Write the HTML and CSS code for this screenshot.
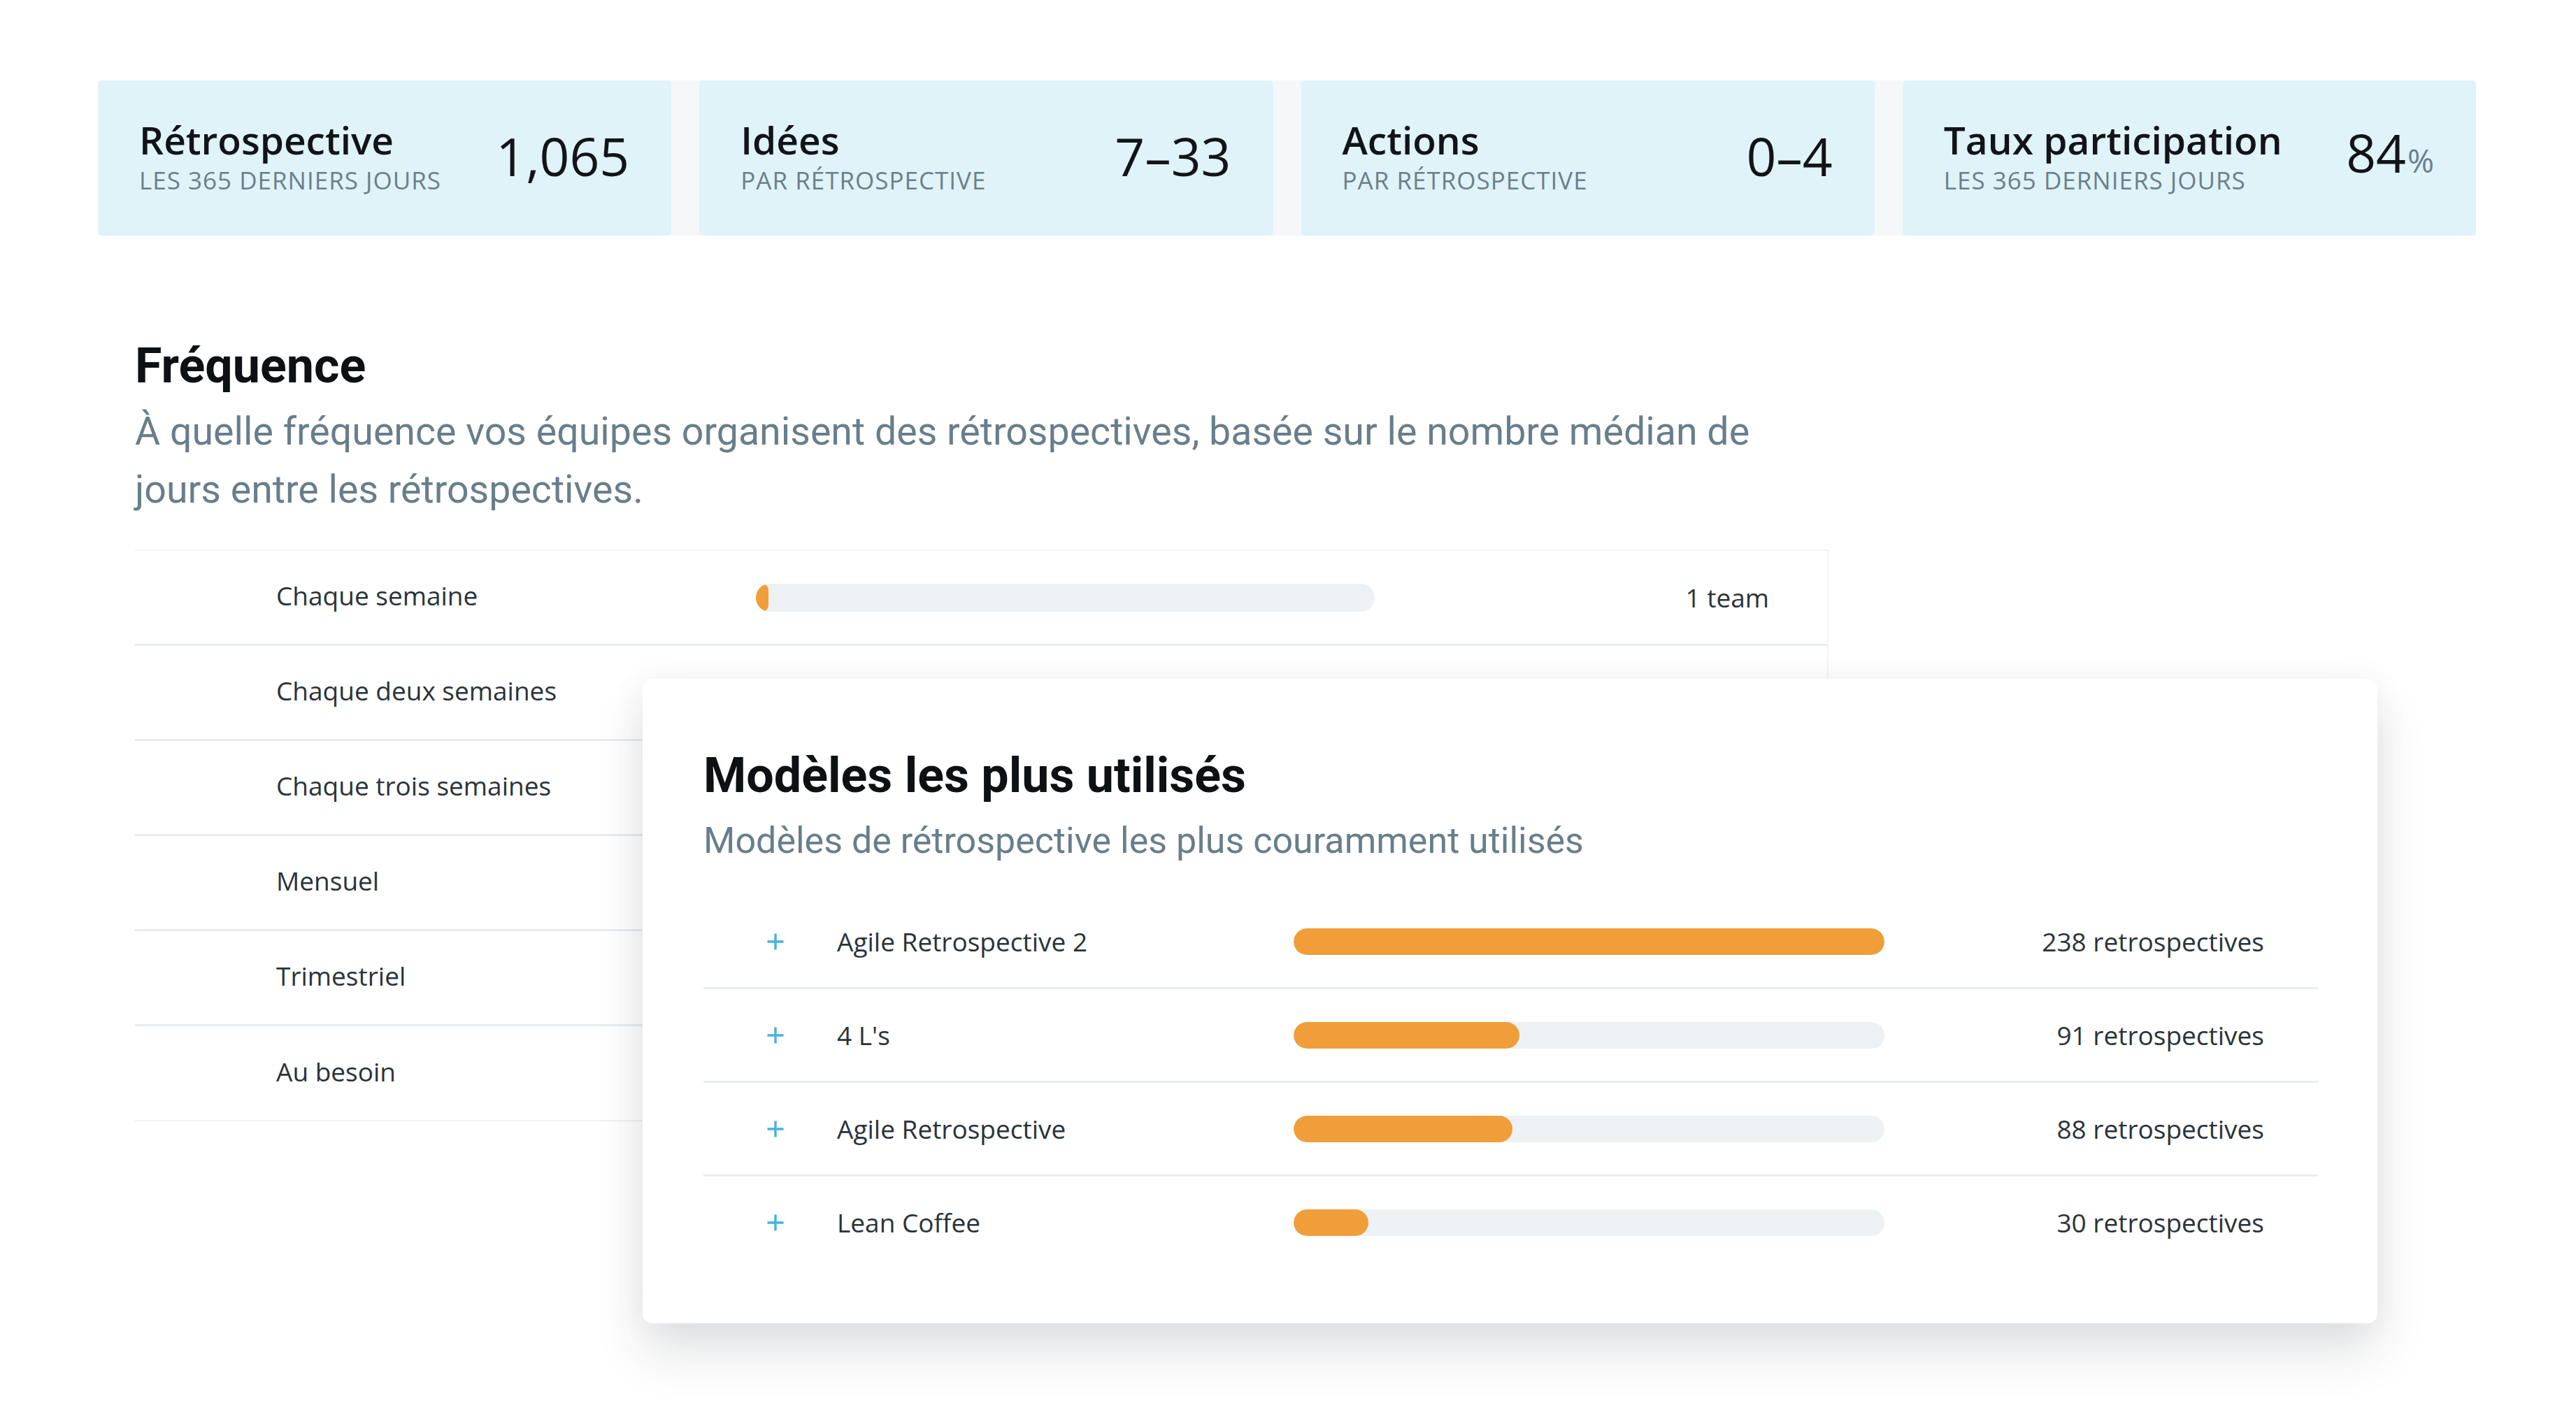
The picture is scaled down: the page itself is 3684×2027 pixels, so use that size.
FILE: index.html
```html
<!DOCTYPE html>
<html lang="fr">
<head>
<meta charset="utf-8">
<title>Statistiques</title>
<link rel="stylesheet" href="styles.css">
</head>
<body>
<main class="page">
  <section class="stats">
    <div class="stat">
      <div class="stat-text">
        <div class="stat-title">Rétrospective</div>
        <div class="stat-sub">LES 365 DERNIERS JOURS</div>
      </div>
      <div class="stat-value">1,065</div>
    </div>
    <div class="stat">
      <div class="stat-text">
        <div class="stat-title">Idées</div>
        <div class="stat-sub">PAR RÉTROSPECTIVE</div>
      </div>
      <div class="stat-value">7–33</div>
    </div>
    <div class="stat">
      <div class="stat-text">
        <div class="stat-title">Actions</div>
        <div class="stat-sub">PAR RÉTROSPECTIVE</div>
      </div>
      <div class="stat-value">0–4</div>
    </div>
    <div class="stat">
      <div class="stat-text">
        <div class="stat-title">Taux participation</div>
        <div class="stat-sub">LES 365 DERNIERS JOURS</div>
      </div>
      <div class="stat-value">84<span class="stat-unit">%</span></div>
    </div>
  </section>

  <section class="freq">
    <h2 class="section-title">Fréquence</h2>
    <p class="section-desc">À quelle fréquence vos équipes organisent des rétrospectives, basée sur le nombre médian de jours entre les rétrospectives.</p>
    <div class="freq-table">
      <div class="freq-row">
        <span class="label">Chaque semaine</span>
        <div class="bar bar-freq"><div class="fill" style="width:2%"></div></div>
        <span class="count">1 team</span>
      </div>
      <div class="freq-row">
        <span class="label">Chaque deux semaines</span>
        <div class="bar bar-freq"><div class="fill" style="width:0%"></div></div>
        <span class="count"></span>
      </div>
      <div class="freq-row">
        <span class="label">Chaque trois semaines</span>
        <div class="bar bar-freq"><div class="fill" style="width:0%"></div></div>
        <span class="count"></span>
      </div>
      <div class="freq-row">
        <span class="label">Mensuel</span>
        <div class="bar bar-freq"><div class="fill" style="width:0%"></div></div>
        <span class="count"></span>
      </div>
      <div class="freq-row">
        <span class="label">Trimestriel</span>
        <div class="bar bar-freq"><div class="fill" style="width:0%"></div></div>
        <span class="count"></span>
      </div>
      <div class="freq-row">
        <span class="label">Au besoin</span>
        <div class="bar bar-freq"><div class="fill" style="width:0%"></div></div>
        <span class="count"></span>
      </div>
    </div>
  </section>

  <section class="templates-card">
    <h2 class="section-title">Modèles les plus utilisés</h2>
    <p class="section-desc card-desc">Modèles de rétrospective les plus couramment utilisés</p>
    <div class="tpl-table">
      <div class="tpl-row">
        <span class="plus"><svg width="24" height="24" viewBox="0 0 24 24"><path d="M12 0.5v23M0.5 12h23" stroke="#45b3dc" stroke-width="3.4" fill="none"/></svg></span>
        <span class="label">Agile Retrospective 2</span>
        <div class="bar bar-tpl"><div class="fill" style="width:100%"></div></div>
        <span class="count">238 retrospectives</span>
      </div>
      <div class="tpl-row">
        <span class="plus"><svg width="24" height="24" viewBox="0 0 24 24"><path d="M12 0.5v23M0.5 12h23" stroke="#45b3dc" stroke-width="3.4" fill="none"/></svg></span>
        <span class="label">4 L's</span>
        <div class="bar bar-tpl"><div class="fill" style="width:38.2%"></div></div>
        <span class="count">91 retrospectives</span>
      </div>
      <div class="tpl-row">
        <span class="plus"><svg width="24" height="24" viewBox="0 0 24 24"><path d="M12 0.5v23M0.5 12h23" stroke="#45b3dc" stroke-width="3.4" fill="none"/></svg></span>
        <span class="label">Agile Retrospective</span>
        <div class="bar bar-tpl"><div class="fill" style="width:37%"></div></div>
        <span class="count">88 retrospectives</span>
      </div>
      <div class="tpl-row">
        <span class="plus"><svg width="24" height="24" viewBox="0 0 24 24"><path d="M12 0.5v23M0.5 12h23" stroke="#45b3dc" stroke-width="3.4" fill="none"/></svg></span>
        <span class="label">Lean Coffee</span>
        <div class="bar bar-tpl"><div class="fill" style="width:12.7%"></div></div>
        <span class="count">30 retrospectives</span>
      </div>
    </div>
  </section>
</main>
</body>
</html>
```

FILE: styles.css
```css
* { box-sizing: border-box; }

html, body {
  margin: 0;
  padding: 0;
  background: #ffffff;
}

body {
  font-family: "Open Sans", "Liberation Sans", sans-serif;
  color: #2b3339;
}

.page {
  position: relative;
  width: 3684px;
  min-height: 2027px;
  padding: 115px 143px 0 140px;
}

/* ---------- stat cards ---------- */
.stats {
  display: flex;
  gap: 40px;
  background: #f5f7f8;
}

.stat {
  flex: 1 1 0;
  height: 222px;
  padding: 0 60px 12px 59px;
  display: flex;
  align-items: center;
  justify-content: space-between;
  background: #dff3f9;
  border-radius: 6px;
}

.stat-title {
  font-family: "Open Sans", sans-serif;
  font-weight: 600;
  font-size: 55px;
  line-height: 76px;
  color: #111418;
  white-space: nowrap;
}

.stat-sub {
  font-family: "Open Sans", sans-serif;
  font-weight: 400;
  font-size: 35px;
  line-height: 40px;
  letter-spacing: 1px;
  color: #6b7f8b;
  white-space: nowrap;
}

.stat-value {
  font-family: "Open Sans", sans-serif;
  font-weight: 400;
  font-size: 75px;
  line-height: 76px;
  padding-top: 6px;
  color: #111418;
  white-space: nowrap;
}

.stat-unit {
  font-size: 46px;
  color: #6b7f8b;
  margin-left: 2px;
}

/* ---------- section headings ---------- */
.section-title {
  margin: 0;
  font-family: Roboto, "Liberation Sans", sans-serif;
  font-weight: 700;
  font-size: 70px;
  line-height: 84px;
  color: #0d1114;
}

.section-desc {
  margin: 11px 0 0;
  font-family: Roboto, "Liberation Sans", sans-serif;
  font-weight: 400;
  font-size: 55.5px;
  line-height: 83px;
  color: #687e8b;
  max-width: 2370px;
}

/* ---------- frequency ---------- */
.freq {
  width: 2422px;
  margin: 144px 0 0 53px;
}

.freq-table {
  margin-top: 44px;
  border-top: 2px solid #f1f3f5;
  border-right: 2px solid #f1f3f5;
}

.freq-row {
  height: 136px;
  display: grid;
  grid-template-columns: 686px 885px 1fr;
  align-items: center;
  padding: 0 83px 0 202px;
  border-bottom: 3px solid #e9edf0;
}

.freq-row:last-child {
  border-bottom: 2px solid #f0f2f4;
}

.freq-row .label {
  padding-bottom: 6px;
}

.label {
  font-family: "Open Sans", sans-serif;
  font-size: 37px;
  color: #2b3339;
  white-space: nowrap;
}

.count {
  font-family: "Open Sans", sans-serif;
  font-size: 37px;
  color: #2b3339;
  text-align: right;
  white-space: nowrap;
}

.bar {
  background: #edf1f3;
  border-radius: 20px;
  overflow: hidden;
}

.bar-freq { height: 40px; }
.bar-tpl { height: 38px; }

.fill {
  height: 100%;
  background: #f09e3a;
  border-radius: 20px;
}

/* ---------- templates card ---------- */
.templates-card {
  position: absolute;
  left: 919px;
  top: 971px;
  width: 2481px;
  padding: 96px 85px 79px 87px;
  background: #ffffff;
  border-radius: 14px;
  box-shadow: 0 42px 70px rgba(30, 42, 52, 0.13), 0 0 50px rgba(30, 42, 52, 0.05);
}

.card-desc {
  margin-top: 10px;
  font-size: 52px;
}

.tpl-table {
  margin-top: 37px;
}

.tpl-row {
  height: 134px;
  display: grid;
  grid-template-columns: 100px 653px 845px 1fr;
  align-items: center;
  padding: 0 77px 0 91px;
  border-bottom: 3px solid #e9edf0;
}

.tpl-row:last-child {
  height: 131px;
  border-bottom: none;
}

.plus {
  display: flex;
  align-items: center;
}

.plus svg { display: block; }
```
